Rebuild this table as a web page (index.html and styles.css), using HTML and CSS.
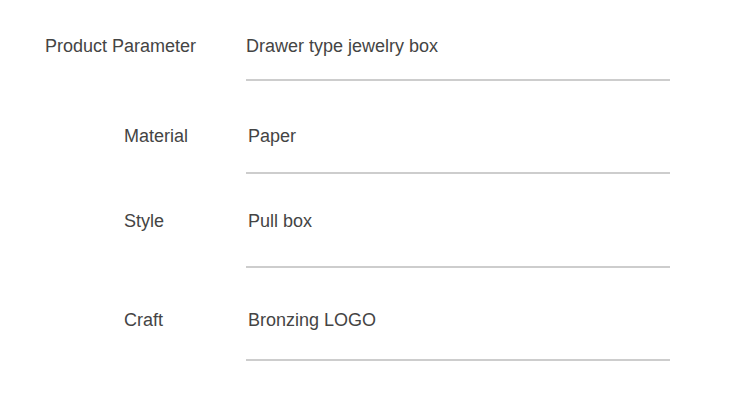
FILE: index.html
```html
<!DOCTYPE html>
<html>
<head>
<meta charset="utf-8">
<link rel="stylesheet" href="styles.css">
</head>
<body>
<div class="params">
  <div class="row row-1">
    <div class="label label-wide">Product Parameter</div>
    <div class="value">Drawer type jewelry box</div>
  </div>
  <div class="row row-2">
    <div class="label">Material</div>
    <div class="value">Paper</div>
  </div>
  <div class="row row-3">
    <div class="label">Style</div>
    <div class="value">Pull box</div>
  </div>
  <div class="row row-4">
    <div class="label">Craft</div>
    <div class="value">Bronzing LOGO</div>
  </div>
</div>
</body>
</html>
```
FILE: styles.css
```css
html, body {
  margin: 0;
  padding: 0;
  background: #fff;
}
body {
  font-family: "Liberation Sans", Arial, sans-serif;
  font-size: 18px;
  color: #444;
}
.params {
  display: flex;
  flex-direction: column;
  padding: 0 0 0 45px;
  width: 625px;
}
.row {
  display: grid;
  grid-template-columns: 201px 1fr;
  line-height: 20px;
}
.label {
  padding-left: 79px;
}
.label-wide {
  padding-left: 0;
}
.value {
  border-bottom: 2px solid #cdcdcd;
}
.row-1 { margin-top: 36px; }
.row-1 .value { padding-bottom: 23px; }
.row-2 { margin-top: 45px; }
.row-2 .value { padding-bottom: 26px; padding-left: 2px; }
.row-3 { margin-top: 37px; }
.row-3 .value { padding-bottom: 35px; padding-left: 2px; }
.row-4 { margin-top: 42px; }
.row-4 .value { padding-bottom: 29px; padding-left: 2px; }
```
